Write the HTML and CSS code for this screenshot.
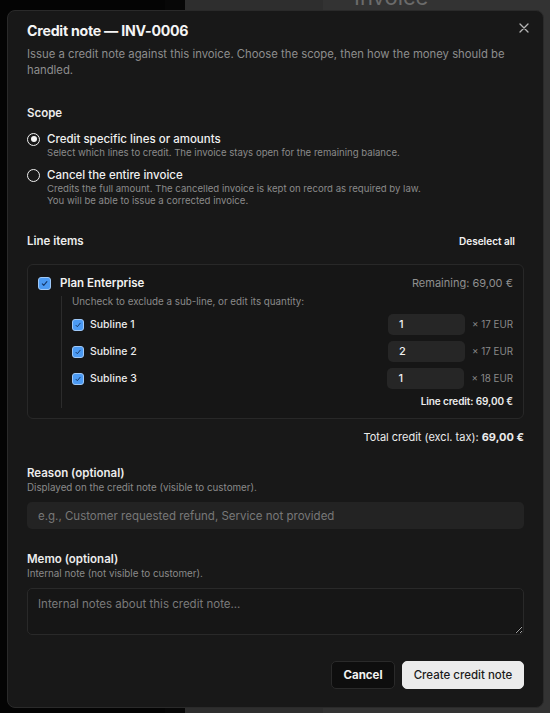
FILE: index.html
```html
<!DOCTYPE html>
<html lang="en">
<head>
<meta charset="utf-8">
<title>Credit note</title>
<link rel="stylesheet" href="styles.css">
</head>
<body>
<div class="backdrop">
  <div class="bg-col bg-black"></div>
  <div class="bg-col bg-black2"></div>
  <div class="bg-col bg-mid"></div>
  <div class="bg-col bg-right"><div class="bg-title">Invoice</div></div>
</div>

<div class="modal" role="dialog">
  <button class="close" aria-label="Close">
    <svg width="10" height="10" viewBox="0 0 10 10"><path d="M1 1L9 9M9 1L1 9" stroke="#b5b5b5" stroke-width="1.3" stroke-linecap="round"/></svg>
  </button>
  <h2 class="title">Credit note — INV-0006</h2>
  <p class="desc">Issue a credit note against this invoice. Choose the scope, then how the money should be handled.</p>

  <div class="section-label scope-label">Scope</div>
  <div class="option opt1">
    <span class="radio checked"></span>
    <div class="opt-text">
      <div class="opt-title">Credit specific lines or amounts</div>
      <div class="opt-sub">Select which lines to credit. The invoice stays open for the remaining balance.</div>
    </div>
  </div>
  <div class="option opt2">
    <span class="radio"></span>
    <div class="opt-text">
      <div class="opt-title">Cancel the entire invoice</div>
      <div class="opt-sub">Credits the full amount. The cancelled invoice is kept on record as required by law.<br>You will be able to issue a corrected invoice.</div>
    </div>
  </div>

  <div class="items-head">
    <div class="section-label">Line items</div>
    <button class="deselect">Deselect all</button>
  </div>

  <div class="card">
    <div class="plan-row">
      <span class="cb cb-lg"><svg viewBox="0 0 12 12"><path d="M3.6 6.4L5.2 8.1L8.6 3.9" fill="none" stroke="#173a6b" stroke-width="1.2" stroke-linecap="round" stroke-linejoin="round"/></svg></span>
      <span class="plan-name">Plan Enterprise</span>
      <span class="remaining">Remaining: 69,00 €</span>
    </div>
    <div class="sub">
      <div class="sub-hint">Uncheck to exclude a sub-line, or edit its quantity:</div>
      <div class="sub-row">
        <span class="cb"><svg viewBox="0 0 12 12"><path d="M3.6 6.4L5.2 8.1L8.6 3.9" fill="none" stroke="#173a6b" stroke-width="1.2" stroke-linecap="round" stroke-linejoin="round"/></svg></span>
        <span class="sub-name">Subline 1</span>
        <span class="qty">1</span>
        <span class="unit">× 17 EUR</span>
      </div>
      <div class="sub-row">
        <span class="cb"><svg viewBox="0 0 12 12"><path d="M3.6 6.4L5.2 8.1L8.6 3.9" fill="none" stroke="#173a6b" stroke-width="1.2" stroke-linecap="round" stroke-linejoin="round"/></svg></span>
        <span class="sub-name">Subline 2</span>
        <span class="qty">2</span>
        <span class="unit">× 17 EUR</span>
      </div>
      <div class="sub-row">
        <span class="cb"><svg viewBox="0 0 12 12"><path d="M3.6 6.4L5.2 8.1L8.6 3.9" fill="none" stroke="#173a6b" stroke-width="1.2" stroke-linecap="round" stroke-linejoin="round"/></svg></span>
        <span class="sub-name">Subline 3</span>
        <span class="qty">1</span>
        <span class="unit">× 18 EUR</span>
      </div>
      <div class="line-credit">Line credit: 69,00 €</div>
    </div>
  </div>

  <div class="total">Total credit (excl. tax): <strong>69,00 €</strong></div>

  <div class="section-label reason-label">Reason (optional)</div>
  <div class="field-sub">Displayed on the credit note (visible to customer).</div>
  <input class="text-input" type="text" placeholder="e.g., Customer requested refund, Service not provided">

  <div class="section-label memo-label">Memo (optional)</div>
  <div class="field-sub">Internal note (not visible to customer).</div>
  <textarea class="text-area" placeholder="Internal notes about this credit note..."></textarea>

  <div class="actions">
    <button class="btn btn-cancel">Cancel</button>
    <button class="btn btn-primary">Create credit note</button>
  </div>
</div>
</body>
</html>
```
FILE: styles.css
```css
html, body {
  margin: 0;
  padding: 0;
  height: 100%;
  overflow: hidden;
}
body {
  background: #303030;
  font-family: Inter, "Noto Sans", sans-serif;
}
.backdrop {
  display: grid;
  grid-template-columns: 165px 20px 138px 1fr;
  height: 713px;
}
.bg-black { background: #040404; }
.bg-black2 { background: #070707; }
.bg-mid { background: #2e2e2e; }
.bg-right { background: #333333; overflow: hidden; }
.bg-title {
  margin: -17px 0 0 31px;
  font-size: 22px;
  line-height: 28px;
  color: #6b6b6b;
}

.modal {
  position: absolute;
  left: 7px;
  top: 10px;
  width: 537px;
  height: 698px;
  box-sizing: border-box;
  background: #181818;
  border: 1px solid #2a2a2a;
  border-radius: 8px;
  padding: 10px 19px 0;
  color: #eeeeee;
  display: flex;
  flex-direction: column;
}
.close {
  position: absolute;
  right: 14px;
  top: 12px;
  width: 10px;
  height: 10px;
  padding: 0;
  border: 0;
  background: none;
  display: flex;
}
.title {
  margin: 0;
  font-size: 14.2px;
  line-height: 20px;
  font-weight: 700;
  color: #f4f4f4;
  letter-spacing: -0.25px;
}
.desc {
  margin: 5px 0 0;
  font-size: 11.3px;
  line-height: 16px;
  color: #8d8d8d;
}
.section-label {
  font-size: 11.5px;
  line-height: 16px;
  font-weight: 600;
  color: #ececec;
}
.scope-label { margin-top: 27px; }

.option {
  display: flex;
  gap: 7px;
}
.opt1 { margin-top: 10px; }
.opt2 { margin-top: 8px; }
.radio {
  flex: none;
  width: 13px;
  height: 13px;
  box-sizing: border-box;
  border: 1.5px solid #f0f0f0;
  border-radius: 50%;
  margin-top: 1.5px;
  display: flex;
  align-items: center;
  justify-content: center;
}
.radio.checked::after {
  content: "";
  width: 6px;
  height: 6px;
  border-radius: 50%;
  background: #f4f4f4;
}
.opt-title {
  font-size: 11.5px;
  line-height: 16px;
  font-weight: 500;
  color: #f0f0f0;
}
.opt-sub {
  font-size: 9.6px;
  line-height: 12px;
  color: #8a8a8a;
}

.items-head {
  margin-top: 26px;
  display: flex;
  justify-content: space-between;
  align-items: center;
}
.deselect {
  border: 0;
  background: none;
  padding: 0 9px 0 0;
  font-family: inherit;
  font-size: 10px;
  line-height: 16px;
  font-weight: 600;
  color: #f2f2f2;
}

.card {
  margin-top: 15px;
  border: 1px solid #282828;
  border-radius: 6px;
  padding: 9px 10px 10px;
  background: #161616;
}
.plan-row {
  display: flex;
  align-items: center;
  height: 18px;
}
.cb {
  flex: none;
  width: 12px;
  height: 12px;
  box-sizing: border-box;
  border-radius: 3px;
  background: #4b9af3;
  border: 1px solid #9fc8f7;
  display: flex;
}
.cb svg { width: 100%; height: 100%; }
.cb-lg { width: 13px; height: 13px; }
.plan-name {
  margin-left: 9px;
  font-size: 11.5px;
  font-weight: 600;
  color: #f2f2f2;
}
.remaining {
  margin-left: auto;
  font-size: 11px;
  color: #8f8f8f;
}
.sub {
  margin: 4px 0 0 23px;
  border-left: 1px solid #2c2c2c;
  padding-left: 10px;
  display: flex;
  flex-direction: column;
}
.sub-hint {
  font-size: 9.8px;
  line-height: 12px;
  color: #8a8a8a;
}
.sub-row {
  display: flex;
  align-items: center;
  height: 21px;
  margin-top: 6px;
}
.sub-name {
  margin-left: 6px;
  font-size: 10.5px;
  font-weight: 500;
  color: #ececec;
}
.qty {
  margin-left: auto;
  width: 77px;
  height: 21px;
  box-sizing: border-box;
  background: #262626;
  border-radius: 5px;
  padding-left: 11px;
  font-size: 11px;
  font-weight: 500;
  line-height: 21px;
  color: #f0f0f0;
}
.unit {
  margin-left: 7px;
  white-space: nowrap;
  font-size: 9.8px;
  color: #8a8a8a;
}
.line-credit {
  margin-top: 5px;
  text-align: right;
  font-size: 10px;
  line-height: 14px;
  font-weight: 600;
  color: #ececec;
  letter-spacing: -0.1px;
}

.total {
  margin-top: 10px;
  text-align: right;
  font-size: 11px;
  line-height: 16px;
  color: #ececec;
}
.total strong { font-weight: 700; }

.reason-label { margin-top: 20px; }
.memo-label { margin-top: 22px; }
.field-sub {
  margin-top: 1px;
  font-size: 9.8px;
  line-height: 12px;
  color: #8a8a8a;
}
.text-input {
  margin-top: 8px;
  height: 27px;
  box-sizing: border-box;
  background: #232323;
  border: 0;
  border-radius: 5px;
  padding: 0 11px;
  font-family: inherit;
  font-size: 11.5px;
  color: #eee;
  outline: none;
}
.text-input::placeholder { color: #787878; }
.text-area {
  margin-top: 8px;
  height: 47px;
  box-sizing: border-box;
  background: #161616;
  border: 1px solid #292929;
  border-radius: 5px;
  padding: 7px 10px;
  font-family: inherit;
  font-size: 11.5px;
  line-height: 16px;
  color: #eee;
  resize: vertical;
  outline: none;
}
.text-area::placeholder { color: #7a7a7a; }

.actions {
  margin-top: 26px;
  display: flex;
  justify-content: flex-end;
  gap: 7px;
}
.btn {
  height: 28px;
  box-sizing: border-box;
  border-radius: 5px;
  font-family: inherit;
  font-size: 11.5px;
  padding: 0;
}
.btn-cancel {
  width: 64px;
  background: #0e0e0e;
  border: 1px solid #2a2a2a;
  color: #f2f2f2;
  font-weight: 700;
}
.btn-primary {
  width: 122px;
  background: #ebebeb;
  border: 1px solid #ebebeb;
  color: #1b1b1b;
  font-weight: 500;
}
```
